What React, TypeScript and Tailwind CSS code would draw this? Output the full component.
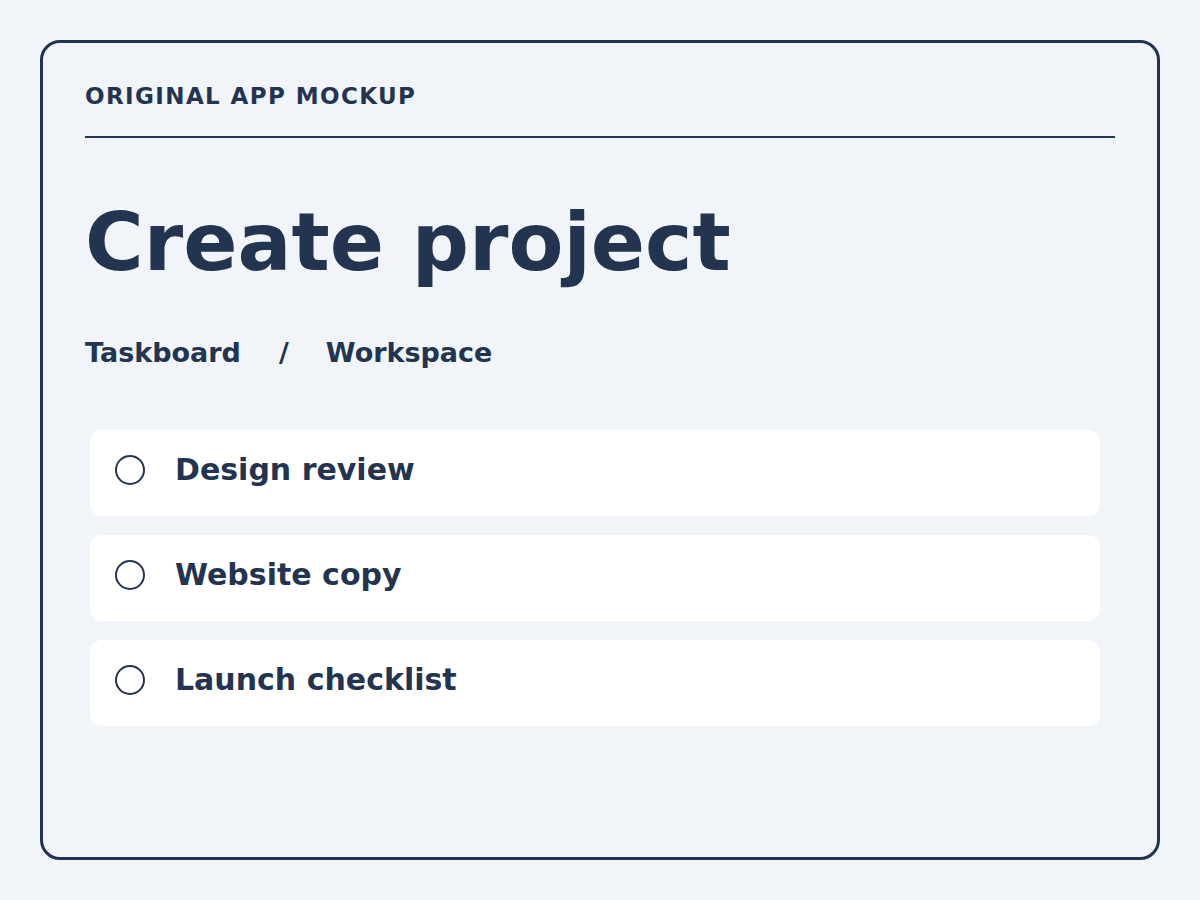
import React from "react";

const items = ["Design review", "Website copy", "Launch checklist"];

export default function App() {
  return (
    <div
      className="w-[1200px] h-[900px] bg-[#f1f5fa] p-[40px] text-[#22344f]"
      style={{ fontFamily: '"DejaVu Sans", sans-serif' }}
    >
      <div className="w-full h-full border-[3px] border-[#22344f] rounded-[20px] pl-[42px] pr-[42px] pt-[40px]">
        <div className="text-[23px] font-bold tracking-[1.4px] leading-[25.6px] pt-[1px]">ORIGINAL APP MOCKUP</div>
        <div className="mt-[26px] h-[2px] bg-[#22344f]" />
        <h1 className="mt-[57px] text-[80px] font-bold leading-[96px]">Create project</h1>
        <div className="mt-[46px] flex text-[27px] font-bold leading-[31px]">
          <span>Taskboard</span>
          <span className="ml-[38px]">/</span>
          <span className="ml-[37px]">Workspace</span>
        </div>
        <div className="mt-[62px] ml-[5px] mr-[15px] flex flex-col gap-[19px]">
          {items.map((t) => (
            <div key={t} className="h-[86px] bg-white rounded-[12px] flex items-start pt-[25px] pl-[25px]">
              <div className="w-[30px] h-[30px] rounded-full border-2 border-[#22344f] shrink-0" />
              <div className="ml-[30px] text-[30px] font-bold leading-[30px]">{t}</div>
            </div>
          ))}
        </div>
      </div>
    </div>
  );
}
